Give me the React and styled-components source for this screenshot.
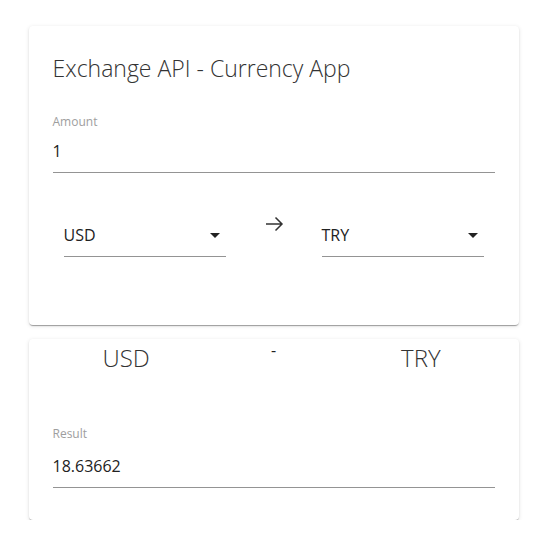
import React from "react";
import styled, { createGlobalStyle } from "styled-components";

const Global = createGlobalStyle`
  html, body { margin: 0; padding: 0; background: #fff; }
  body { font-family: "Open Sans", "Noto Sans", sans-serif; color: #222; }
`;

const Page = styled.main`
  width: 490px;
  margin: 0 auto;
  padding-top: 26px;
  display: flex;
  flex-direction: column;
  gap: 14px;
`;

const Card = styled.section`
  background: #fff;
  border-radius: 4px;
  box-shadow: 0 2px 1px -1px rgba(0,0,0,0.22), 0 1px 1px 0 rgba(0,0,0,0.16), 0 1px 4px 0 rgba(0,0,0,0.12);
  padding: ${p => p.$pad};
  display: flex;
  flex-direction: column;
`;

const Title = styled.h1`
  margin: 0;
  font-size: 23px;
  line-height: 32px;
  font-weight: 300;
  color: #333;
`;

const Field = styled.div`
  display: flex;
  flex-direction: column;
  margin-top: ${p => p.$top}px;
`;

const Label = styled.label`
  font-size: 12px;
  line-height: 16px;
  color: #9e9e9e;
`;

const Value = styled.div`
  margin-top: ${p => p.$gap}px;
  font-size: 16px;
  line-height: 24px;
  color: #222;
  padding-bottom: 9px;
  border-bottom: 1px solid #949494;
`;

const SelectRow = styled.div`
  margin-top: 39px;
  padding: 0 11px;
  display: flex;
  justify-content: space-between;
  align-items: flex-start;
`;

const Select = styled.div`
  width: 162px;
  margin-top: 11px;
  display: flex;
  align-items: center;
  justify-content: space-between;
  font-size: 16px;
  line-height: 24px;
  color: #222;
  padding-bottom: 9px;
  border-bottom: 1px solid #949494;
`;

const Caret = styled.span`
  width: 0;
  height: 0;
  margin-right: 6px;
  border-left: 5px solid transparent;
  border-right: 5px solid transparent;
  border-top: 5px solid #222;
`;

const ArrowIcon = styled.svg`
  display: block;
  width: 24px;
  height: 24px;
`;

const PairRow = styled.div`
  display: grid;
  grid-template-columns: repeat(3, 1fr);
  align-items: start;
`;

const Big = styled.div`
  text-align: center;
  font-size: 24px;
  line-height: 36px;
  font-weight: 300;
  color: #333;
`;

const Dash = styled.div`
  text-align: center;
  font-size: 16px;
  line-height: 20px;
  color: #222;
`;

export default function App() {
  return (
    <>
      <Global />
      <Page>
        <Card $pad="26px 24px 68px">
          <Title>Exchange API - Currency App</Title>
          <Field $top={30}>
            <Label>Amount</Label>
            <Value $gap={9}>1</Value>
          </Field>
          <SelectRow>
            <Select>
              <span>USD</span>
              <Caret />
            </Select>
            <ArrowIcon viewBox="0 0 24 24" aria-hidden="true">
              <path d="M4 12h15M13.5 5.5L20 12l-6.5 6.5" fill="none" stroke="#333" strokeWidth="1.5" />
            </ArrowIcon>
            <Select>
              <span>TRY</span>
              <Caret />
            </Select>
          </SelectRow>
        </Card>
        <Card $pad="1px 24px 32px">
          <PairRow>
            <Big>USD</Big>
            <Dash>-</Dash>
            <Big>TRY</Big>
          </PairRow>
          <Field $top={50}>
            <Label>Result</Label>
            <Value $gap={12}>18.63662</Value>
          </Field>
        </Card>
      </Page>
    </>
  );
}
